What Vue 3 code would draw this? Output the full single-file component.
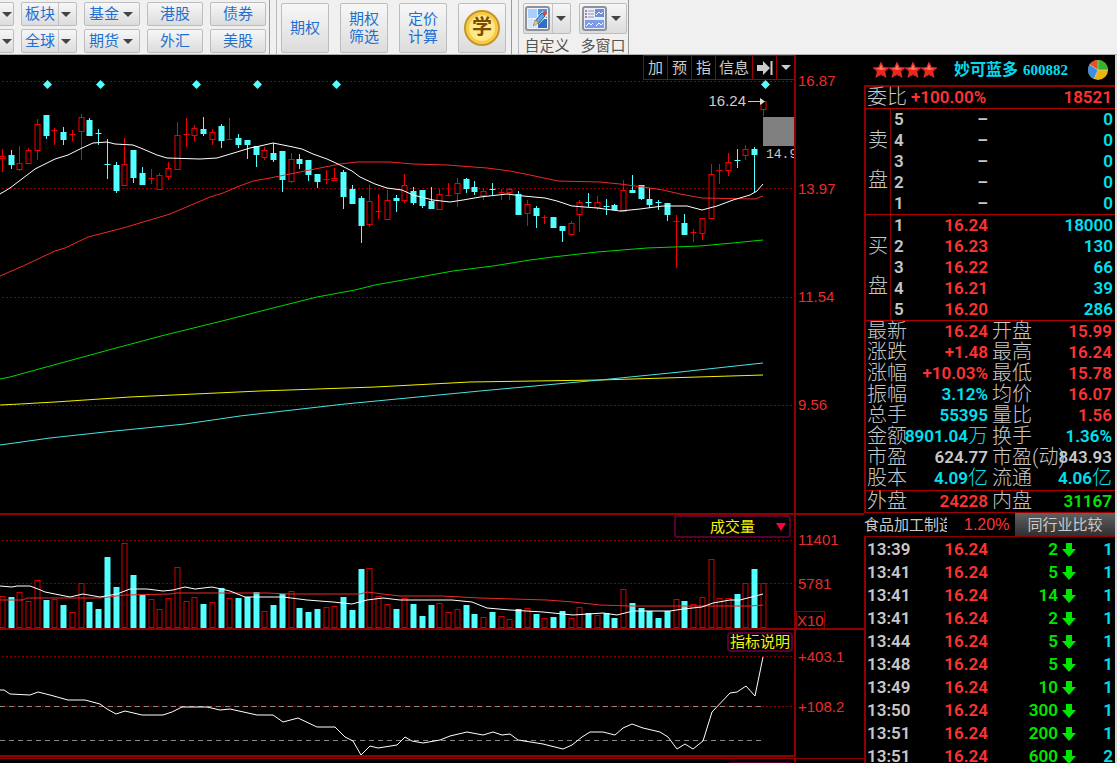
<script setup>
const categoryColumns = [
  { id: 'a', items: [{ name: '板块', arrow: true, split: true }, { name: '全球', arrow: true, split: true }] },
  { id: 'b', items: [{ name: '基金', arrow: true }, { name: '期货', arrow: true }] },
  { id: 'c', items: [{ name: '港股' }, { name: '外汇' }] },
  { id: 'd', items: [{ name: '债券' }, { name: '美股' }] },
]
const bigButtons = [['期权'], ['期权', '筛选'], ['定价', '计算']]

// direction, high, body top, body bottom, low, volume top
const rows = `r 149 156 158 172 596|c 150 155 164 169 597|r 146 163 169 171 592|r 148 150 163 163 601|r 119 124 150 160 580
c 115 115 135 139 600|r 128 130 131 145 599|c 127 132 139 145 605|r 130 134 134 141 612|r 114 117 131 160 583
c 118 120 135 135 602|c 129 133 133 145 609|c 139 164 164 179 557|c 162 165 190 193 587|r 138 164 185 185 543
c 150 150 177 183 575|c 167 173 184 184 595|r 169 178 179 184 599|r 173 175 189 190 609|r 162 168 176 180 598
r 122 135 169 169 567|r 118 134 134 147 601|r 125 128 135 141 597|c 117 129 133 136 604|r 129 132 139 145 602
c 124 126 140 148 588|r 118 139 140 140 598|c 134 138 144 148 598|c 140 140 144 159 597|c 146 146 154 167 592
r 147 150 157 160 611|c 143 153 159 162 605|c 151 151 179 192 594|r 153 159 181 183 591|c 154 159 163 169 608
c 160 160 174 181 612|c 174 174 181 188 609|r 170 179 179 184 607|r 168 178 180 181 606|c 170 172 196 209 597
c 185 189 203 204 610|c 196 198 225 243 569|r 185 201 224 227 568|r 194 211 211 219 596|r 190 200 219 219 604
c 195 198 200 212 609|r 174 185 200 203 598|c 187 191 202 205 604|c 190 190 205 208 616|c 187 201 208 208 605
r 189 194 209 210 603|r 183 195 196 196 612|r 178 183 193 207 609|c 178 179 188 193 605|c 181 187 191 195 614
r 188 191 195 200 617|c 183 189 190 195 612|r 189 192 192 200 616|r 188 189 192 200 619|c 191 194 214 214 609
r 200 204 213 226 608|c 206 208 215 228 614|r 215 217 218 224 618|c 217 217 227 227 617|c 226 226 230 242 611
r 221 223 234 234 618|r 200 202 214 232 607|c 193 202 203 207 613|r 196 202 207 210 615|c 199 206 207 215 613
c 204 205 209 209 618|r 180 190 211 211 589|c 175 190 192 193 603|c 185 185 198 200 608|c 188 199 204 208 611
c 200 202 203 210 618|c 203 203 214 221 611|r 215 221 222 268 599|c 214 223 234 235 601|r 229 232 232 242 604
r 218 218 233 240 597|r 164 174 218 219 559|r 164 170 171 184 598|r 153 162 170 176 598|c 149 160 161 168 594
r 145 149 155 160 583|c 147 149 154 193 569|r 101 101 109 116 583`
const candles = rows.split(/[|\n]/).map((row, i) => {
  const [dir, high, top, bottom, low, vol] = row.split(' ')
  return { x: Math.round(i * 8.747 + 2) + 0.5, up: dir === 'r', high: +high, top: +top, bottom: +bottom, low: +low, vol: +vol }
})

const gems = [47, 100, 196, 257, 336, 765]

const lines = {
  white: '0,194 10,188 35,169 55,159 68,155 82,148 93,143 107,142 115,144 133,145 143,149 157,155 167,158 200,159 217,158 227,155 237,152 250,148 260,146 273,143 293,147 302,149 313,154 327,159 338,164 352,171 360,177 375,184 387,188 402,190 413,195 433,200 450,202 463,200 480,197 507,194 523,196 545,198 557,201 572,206 597,208 620,211 640,209 663,206 687,206 702,210 717,206 733,200 750,195 757,191 763,184',
  red: '0,276 23,266 55,251 65,248 88,237 123,228 170,214 210,197 223,193 237,187 253,181 270,178 285,175 310,170 340,164 357,162 390,162 413,164 447,165 487,168 510,171 530,175 558,181 600,182 620,184 643,187 663,190 680,194 702,198 755,199 763,196',
  green: '0,379 10,377 28,372 116,348 165,335 222,321 277,307 317,297 355,290 375,285 403,280 453,271 493,266 530,260 553,257 597,252 647,248 700,246 733,243 763,240',
  yellow: '0,405 20,404 55,402 130,397 260,391 375,387 470,382 600,380 763,375',
  cyan: '0,445 50,438 105,432 185,424 240,416 345,404 480,391 600,380 680,372 763,363',
  volWhite: '0,586 12,587 17,586 30,586 38,589 45,592 70,597 83,594 100,597 117,594 130,589 147,589 163,591 173,590 185,587 195,589 212,587 230,591 245,597 283,597 307,600 333,602 352,604 367,600 383,598 400,600 452,600 472,602 487,608 510,610 543,612 573,615 603,613 617,615 633,611 670,611 683,609 702,607 713,603 730,600 740,600 763,594',
  volRed: '0,600 23,600 27,598 100,598 125,595 170,594 177,593 267,593 290,594 360,594 367,592 383,594 400,596 442,596 480,598 547,600 573,602 600,605 630,606 750,606 763,605',
  index: '0,690 4,690 10,694 30,695 38,692 50,695 68,700 85,700 100,704 107,709 116,714 125,711 142,715 163,715 172,712 182,707 207,707 220,710 230,709 257,715 273,715 283,722 298,718 317,727 335,727 345,737 353,741 361,755 370,746 378,748 397,745 405,737 412,741 423,743 440,740 450,736 467,732 483,735 493,732 502,735 510,734 518,740 543,744 563,749 572,745 582,737 590,732 603,732 615,735 623,728 632,724 643,728 660,732 668,737 677,749 685,744 693,749 703,741 712,712 730,693 737,692 746,686 755,696 763,657',
}

const asks = [5, 4, 3, 2, 1].map(level => ({ level, price: '–', qty: '0' }))
const bids = [[1, '16.24', '18000'], [2, '16.23', '130'], [3, '16.22', '66'], [4, '16.21', '39'], [5, '16.20', '286']]
  .map(([level, price, qty]) => ({ level, price, qty }))
const books = [
  { id: 'ask', chars: ['卖', '盘'], levels: asks, tone: 'pale' },
  { id: 'bid', chars: ['买', '盘'], levels: bids, tone: 'up' },
]

const facts = [
  ['最新', '16.24', '', 'up', '开盘', '15.99', '', 'up'],
  ['涨跌', '+1.48', '', 'up', '最高', '16.24', '', 'up'],
  ['涨幅', '+10.03%', '', 'up', '最低', '15.78', '', 'up'],
  ['振幅', '3.12%', '', 'aqua', '均价', '16.07', '', 'up'],
  ['总手', '55395', '', 'aqua', '量比', '1.56', '', 'up'],
  ['金额', '8901.04', '万', 'aqua', '换手', '1.36%', '', 'aqua'],
  ['市盈', '624.77', '', 'pale', '市盈(动)', '843.93', '', 'pale'],
  ['股本', '4.09', '亿', 'aqua', '流通', '4.06', '亿', 'aqua'],
]

const ticks = [
  ['13:39', 2, 1], ['13:41', 5, 1], ['13:41', 14, 1], ['13:41', 2, 1], ['13:44', 5, 1],
  ['13:48', 5, 1], ['13:49', 10, 1], ['13:50', 300, 1], ['13:51', 200, 1], ['13:51', 600, 2],
]
</script>

<template>
  <div class="app">
    <header class="toolbar">
      <div class="stack edge">
        <button class="btn" aria-label="更多行情"><i class="caret"></i></button>
        <button class="btn" aria-label="更多市场"><i class="caret"></i></button>
      </div>
      <div v-for="col in categoryColumns" :key="col.id" class="stack">
        <button v-for="b in col.items" :key="b.name" class="btn" :class="{ split: b.split }">
          <span class="btn-text">{{ b.name }}</span><span v-if="b.arrow" class="drop"><i class="caret"></i></span>
        </button>
      </div>
      <i class="divider"></i>
      <div class="bigs">
        <button v-for="(b, i) in bigButtons" :key="i" class="btn big">
          <span v-for="t in b" :key="t">{{ t }}</span>
        </button>
        <button class="btn big"><span class="coin">学</span></button>
      </div>
      <i class="divider"></i>
      <div class="tools">
        <div class="tool">
          <button class="btn tool-btn split" aria-labelledby="t1">
            <svg width="25" height="25" viewBox="0 0 25 25">
              <rect x="1" y="1" width="23" height="23" rx="2" fill="#eef2f6" stroke="#8d9299" stroke-width="2" />
              <rect x="3" y="3" width="9" height="9" fill="#a9d0fa" /><rect x="13" y="3" width="9" height="9" fill="#4a93e6" />
              <rect x="3" y="13" width="9" height="9" fill="#d3e6fb" /><rect x="13" y="13" width="9" height="9" fill="#2f6fc8" />
              <path d="M7 21l2-7 9-9 5 4-9 9z" fill="#fff" /><path d="M10 15l7-8 3 3-7 8z" fill="#5ba5ed" stroke="#34567d" />
              <path d="M17 7l2-2q3 0 3 3l-2 2z" fill="#db4932" /><path d="M8 20l2-6 4 3z" fill="#eec394" stroke="#7f6755" stroke-width=".6" />
            </svg>
            <span class="drop"><i class="caret"></i></span>
          </button>
          <span id="t1">自定义</span>
        </div>
        <div class="tool">
          <button class="btn tool-btn" aria-labelledby="t2">
            <svg width="25" height="25" viewBox="0 0 25 25">
              <rect x="1" y="1" width="23" height="23" rx="2" fill="#e8edfa" stroke="#8d9299" stroke-width="2" />
              <path d="M3 5h2M3 8h2M3 11h2" stroke="#bf5264" stroke-width="1.500" /><path d="M6 5h6M6 8h6M6 11h6" stroke="#8d93b4" />
              <rect x="13" y="3" width="9" height="8" fill="#6f8fdc" /><rect x="3" y="14" width="19" height="8" fill="#7f9de6" />
              <path d="M14 9l3-3 2 2 2-2M4 20l3-3 2 2 2-2M14 20l3-3 2 2 2-2" fill="none" stroke="#fff" />
            </svg>
            <span class="drop"><i class="caret"></i></span>
          </button>
          <span id="t2">多窗口</span>
        </div>
      </div>
      <i class="divider end"></i>
    </header>

    <main class="main">
      <section class="charts">
        <div class="panel price">
          <div class="plot">
            <svg class="canvas" viewBox="0 55 794 458" preserveAspectRatio="none">
              <path class="grid" d="M2 81.5H794M2 188.5H794M2 297.5H794M2 405.5H794" />
              <g v-for="(c, i) in candles" :key="i" :class="c.up ? 'rise' : 'fall'">
                <path :d="`M${c.x} ${c.high}V${c.top}M${c.x} ${c.bottom}V${c.low}`" />
                <path v-if="c.bottom - c.top < 2" class="flat" :d="`M${c.x - 3} ${c.top + 0.5}h6`" />
                <rect v-else :x="c.x - 2.5" :y="c.top + 0.5" width="5" :height="c.bottom - c.top" />
              </g>
              <polyline class="ln green" :points="lines.green" />
              <polyline class="ln yellow" :points="lines.yellow" />
              <polyline class="ln cyan" :points="lines.cyan" />
              <polyline class="ln red" :points="lines.red" />
              <polyline class="ln white" :points="lines.white" />
              <path v-for="g in gems" :key="g" :d="`M${g + 0.5} 80l4.500 4.500-4.500 4.500-4.500-4.500z`" fill="#54ffff" />
              <rect x="763" y="117" width="31" height="29" fill="#808080" />
              <path d="M748 101.500h12" stroke="#c8c8c8" /><path d="M760 98l5 3.500-5 3.500z" fill="#ddd" />
            </svg>
            <nav class="menu">
              <button>加</button><button>预</button><button>指</button><button class="wide">信息</button>
              <button aria-label="跳至最新">
                <svg width="18" height="16" viewBox="0 0 18 16"><path d="M1 5h6V1l7 7-7 7v-4H1z" fill="#ccc" /><path d="M15.500 1v14" stroke="#ccc" stroke-width="2" /></svg>
              </button>
              <button class="last" aria-label="菜单"><i class="caret light"></i></button>
            </nav>
            <span class="peak">16.24</span>
            <span class="gap">14.9</span>
          </div>
          <div class="axis"><span>16.87</span><span>13.97</span><span>11.54</span><span>9.56</span></div>
        </div>

        <div class="panel volume">
          <div class="plot">
            <svg class="canvas" viewBox="0 515 794 113" preserveAspectRatio="none">
              <path class="grid" d="M2 540.5H794M2 583.5H794" />
              <g v-for="(c, i) in candles" :key="i" :class="c.up ? 'rise' : 'fall'">
                <rect class="vol" :x="c.x - 2.5" :y="c.vol + 0.5" width="5" :height="627 - c.vol" />
              </g>
              <polyline class="ln red" :points="lines.volRed" />
              <polyline class="ln white" :points="lines.volWhite" />
            </svg>
            <button class="chip vol-chip">成交量<i class="tri"></i></button>
          </div>
          <div class="axis"><span>11401</span><span>5781</span><span class="unit">X10</span></div>
        </div>

        <div class="panel index">
          <div class="plot">
            <svg class="canvas" viewBox="0 630 794 125" preserveAspectRatio="none">
              <path class="grid" d="M2 656.5H794M2 706.5H794" />
              <path class="dash" d="M0 706.500H763M0 740.500H763" />
              <polyline class="ln white" :points="lines.index" />
            </svg>
            <button class="chip info-chip">指标说明</button>
          </div>
          <div class="axis"><span>+403.1</span><span>+108.2</span></div>
        </div>
        <div class="panel next"><div class="plot"><i class="chip stub"></i></div><div class="axis"></div></div>
      </section>

      <aside class="quote">
        <div class="title">
          <span class="stars">
            <svg v-for="n in 4" :key="n" width="16" height="16" viewBox="0 0 16 16">
              <path d="M8 0l2.400 5.300 5.600.500-4.200 3.800 1.400 6L8 12.600l-5.200 3 1.400-6L0 5.800l5.600-.500z" fill="#f0261c" stroke="#c33a30" stroke-width=".6" />
              <path d="M8 2l1.500 4 4 .700-5.500 1.300-5.500-1.400 4-.600z" fill="#ff7466" />
            </svg>
          </span>
          <b class="name">妙可蓝多</b><b class="code">600882</b>
          <svg class="pie" width="20" height="20" viewBox="0 0 20 20">
            <circle cx="10" cy="10" r="10" fill="#e9b50f" /><path d="M10 10V0a10 10 0 0 1 10 10z" fill="#35b52d" />
            <path d="M10 10L1.500 4.500A10 10 0 0 1 10 0z" fill="#e0532a" /><path d="M10 10L1.500 4.500A10 10 0 0 0 6 19z" fill="#3c8fe0" />
            <path d="M10 10L1.500 4.500M10 10V0M10 10h10M10 10L6 19" stroke="#f5e6b0" stroke-width=".5" />
          </svg>
        </div>

        <div class="board">
          <div class="ratio"><span class="lab">委比</span><b class="up">+100.00%</b><b class="up end">18521</b></div>
          <div v-for="book in books" :key="book.id" class="book">
            <div class="side"><span v-for="(c, i) in book.chars" :key="i">{{ c }}</span></div>
            <table>
              <tbody>
                <tr v-for="l in book.levels" :key="l.level">
                  <th scope="row">{{ l.level }}</th><td class="p" :class="book.tone">{{ l.price }}</td><td class="aqua">{{ l.qty }}</td>
                </tr>
              </tbody>
            </table>
          </div>
          <table class="facts">
            <colgroup><col class="c1"><col class="c2"><col class="c3"><col class="c4"></colgroup>
            <tbody>
              <tr v-for="f in facts" :key="f[0] + f[4]">
                <th scope="row">{{ f[0] }}</th>
                <td><div :class="f[3]">{{ f[1] }}<span v-if="f[2]" class="u">{{ f[2] }}</span></div></td>
                <th scope="row">{{ f[4] }}</th>
                <td><div :class="f[7]">{{ f[5] }}<span v-if="f[6]" class="u">{{ f[6] }}</span></div></td>
              </tr>
            </tbody>
          </table>
          <table class="facts flow">
            <colgroup><col class="c1"><col class="c2"><col class="c3"><col class="c4"></colgroup>
            <tbody>
              <tr><th scope="row">外盘</th><td><div class="up">24228</div></td><th scope="row">内盘</th><td><div class="down">31167</div></td></tr>
            </tbody>
          </table>
        </div>

        <div class="sector">
          <span class="sector-name">食品加工制造</span><span class="sector-pct">1.20%</span>
          <button class="compare">同行业比较</button>
        </div>

        <div class="ticks">
          <table>
            <tbody>
              <tr v-for="(t, i) in ticks" :key="i">
                <th scope="row">{{ t[0] }}</th><td class="up t-price">16.24</td><td class="down t-vol">{{ t[1] }}</td>
                <td class="t-arrow"><svg width="14" height="14" viewBox="0 0 14 14"><path d="M4 0h6v6h4l-7 8-7-8h4z" fill="#00e600" /></svg></td>
                <td class="aqua">{{ t[2] }}</td>
              </tr>
            </tbody>
          </table>
        </div>
      </aside>
    </main>
  </div>
</template>

<style>
body { margin: 0; background: #000; overflow: hidden; }
</style>

<style scoped>
* { box-sizing: border-box; }
.app { height: 100vh; overflow: hidden; display: flex; flex-direction: column; background: #000; font-family: "Liberation Sans", "Noto Sans CJK SC", sans-serif; }
button { font: inherit; margin: 0; padding: 0; cursor: pointer; }

.toolbar { flex: none; height: 55px; display: flex; background: #f0f0f0; border-bottom: 1px solid #b0b0b0; color: #1f6fd0; font-size: 15px; overflow: hidden; }
.stack { display: flex; flex-direction: column; gap: 3px; padding-top: 2px; margin-right: 7px; width: 56px; }
.stack.edge { width: 14px; }
.stack .btn { height: 24px; }
.edge .btn { margin-left: -8px; justify-content: flex-end; padding-right: 1px; }
.btn { display: flex; align-items: center; justify-content: center; background: linear-gradient(#f7f7f7, #dcdcdc); border: 1px solid #bdbdbd; border-radius: 2px; color: inherit; line-height: 18px; }
.btn-text { flex: none; }
.drop { display: flex; align-items: center; justify-content: center; width: 15px; height: 100%; margin-left: 1px; }
.split .drop { border-left: 1px solid #c4c4c4; margin-left: 3px; }
.caret { flex: none; border: 5px solid transparent; border-top-color: #444; border-bottom: 0; }
.caret.light { border-top-color: #ccc; }
.divider { flex: none; width: 8px; margin: 0 4px 0 -4px; border-left: 1px solid #999; border-right: 1px solid #bbb; }
.bigs { display: flex; gap: 11px; padding-top: 3px; margin-right: 9px; }
.btn.big { width: 48px; height: 50px; flex-direction: column; }
.coin { width: 36px; height: 36px; border-radius: 50%; border: 2px solid #c4952c; background: radial-gradient(#ffe88b 55%, #f8c93c 60%, #ffe27a); color: #7b4b00; font-size: 20px; font-weight: bold; line-height: 31px; text-align: center; }
.tools { display: flex; gap: 8px; padding-top: 3px; color: #555; }
.tool { display: flex; flex-direction: column; align-items: center; line-height: 24px; width: 48px; white-space: nowrap; }
.tool-btn { width: 48px; height: 31px; flex: none; }
.tool-btn .drop { width: 17px; }
.tool-btn.split .drop { margin-left: 2px; }
.divider.end { margin: 0 0 0 1px; border-right: 0; }

.main { flex: 1; min-height: 0; display: flex; }
.charts { flex: 1; min-width: 0; display: flex; flex-direction: column; }
.panel { flex: none; display: flex; border-bottom: 2px solid #8f0000; }
.price { height: 460px; }
.volume { height: 115px; }
.index { height: 127px; border-bottom: 0; }
.index .plot { border-bottom: 2px solid #8f0000; }
.next { flex: 1; margin-top: 1px; border-top: 1px solid #8f0000; border-bottom: 0; }
.plot { position: relative; flex: 1; min-width: 0; border-right: 2px solid #8f0000; }
.canvas { display: block; width: 100%; height: 100%; }
.grid { stroke: #8a0000; stroke-dasharray: 2 2; fill: none; }
.dash { stroke: #888; stroke-dasharray: 5 4; }
.rise path { stroke: #f00000; fill: none; }
.rise rect { stroke: #f00000; fill: #000; }
.rise .vol { stroke: #d00000; }
.fall path { stroke: #54ffff; }
.fall rect { fill: #54ffff; stroke: #54ffff; }
.ln { fill: none; stroke-width: 1; }
.white { stroke: #fff; }
.red { stroke: #f02828; }
.green { stroke: #00d800; }
.yellow { stroke: #f2f200; }
.cyan { stroke: #48e4e4; }
.axis { width: 68px; color: #e82c2c; font-size: 15px; line-height: 20px; display: flex; flex-direction: column; padding-left: 2px; }
.price .axis { padding-top: 16px; gap: 88px; }
.volume .axis { padding-top: 15px; gap: 24px; }
.index .axis { padding-top: 17px; gap: 30px; }
.axis .unit { border: 1px solid #8f0000; width: 29px; height: 19px; line-height: 18px; margin-top: -7px; margin-left: -2px; }

.menu { position: absolute; top: 0; right: 0; display: flex; border: 1px solid #a00000; border-right: 0; background: #000; }
.menu button { width: 24px; height: 23px; background: #000; border: 0; border-right: 1px solid #a00000; color: #ccc; font-size: 15px; line-height: 22px; display: flex; align-items: center; justify-content: center; }
.menu .wide { width: 37px; }
.menu .last { width: 17px; border-right: 0; }
.peak { position: absolute; right: 48px; top: 36px; font-size: 15px; line-height: 20px; color: #ccc; }
.gap { position: absolute; left: calc(100% - 28px); right: 0; top: 90px; overflow: hidden; font: 13px/20px "Liberation Mono", monospace; color: #ccc; }
.chip { position: absolute; right: 3px; display: flex; align-items: center; border: 2px solid #560030; border-radius: 4px; background: #000; color: #f4f400; font-size: 15px; line-height: 18px; }
.vol-chip { top: 0; width: 117px; height: 23px; justify-content: flex-end; gap: 21px; padding-right: 3px; }
.tri { border: 5px solid transparent; border-top: 8px solid #ff0040; border-bottom: 0; }
.info-chip { top: 2px; right: 1px; width: 66px; height: 20px; justify-content: center; white-space: nowrap; }
.stub { top: 3px; right: 1px; width: 66px; height: 20px; }

.quote { flex: none; width: 253px; border-right: 2px solid #d8d8d8; display: flex; flex-direction: column; overflow: hidden; }
.up { color: #ff3232; }
.aqua { color: #00e1f0; }
.down { color: #00e600; }
.pale { color: #c8c8c8; }
.title { flex: none; height: 30px; display: flex; align-items: center; padding: 0 7px 0 9px; color: #00dcec; }
.stars { display: flex; width: 65px; margin-right: 16px; }
.name { font-size: 16px; line-height: 20px; }
.code { font: bold 15px/20px "Liberation Serif", serif; margin-left: 5px; }
.pie { margin-left: auto; }
.board { flex: none; border: 2px solid #900000; border-right: 0; border-bottom: 1px solid #a00000; font-family: Roboto, "Noto Sans CJK SC", sans-serif; font-size: 17px; }
.ratio { display: flex; align-items: center; height: 21px; line-height: 21px; padding: 0 3px 0 1px; }
.ratio b { font-weight: 600; margin-left: 4px; }
.ratio .end { margin-left: auto; }
.lab, .side, .facts th, .u { font-size: 20px; font-weight: 300; color: #c8c8c8; }
.book { display: flex; border-top: 1px solid #b00000; }
.side { width: 25px; border-right: 1px solid #900000; display: flex; flex-direction: column; align-items: center; gap: 18px; padding-top: 20px; line-height: 22px; }
table { border-collapse: collapse; flex: 1; width: 100%; table-layout: fixed; }
td, th { padding: 0; line-height: 21px; text-align: right; font-weight: 600; }
th { text-align: left; color: #c8c8c8; }
.book th { width: 18px; padding-left: 3px; }
.book td { padding-right: 2px; }
.book .p { width: 79px; padding: 0; }
.facts { border-top: 1px solid #b00000; }
.facts th { white-space: nowrap; padding-left: 1px; height: 21px; }
.facts td div { display: flex; justify-content: flex-end; line-height: 21px; height: 21px; }
.facts .u { color: inherit; }
.c1 { width: 34px; }
.c2 { width: 88px; }
.c3 { width: 69px; }
.c4 { width: auto; }
.facts td:last-child { padding-right: 3px; }
.facts td + th { padding-left: 4px; }
.flow { margin-top: 1px; }

.sector { flex: none; display: flex; height: 23px; align-items: center; font-size: 15px; line-height: 22px; }
.sector-name { width: 83px; overflow: hidden; white-space: nowrap; color: #ccc; }
.sector-pct { color: #ff3232; margin-left: 17px; font-size: 16px; }
.compare { margin-left: auto; width: 100px; height: 23px; border: 0; background: linear-gradient(#606060, #303030); color: #ccc; line-height: 22px; }
.ticks { flex: 1; min-height: 0; overflow: hidden; border-left: 2px solid #900000; border-top: 1px solid #900000; padding-top: 1px; font-family: Roboto, sans-serif; font-size: 17px; }
.ticks td, .ticks th { height: 23px; line-height: 23px; }
.ticks th { width: 60px; padding-left: 1px; }
.ticks .t-price { width: 62px; }
.ticks .t-vol { width: 70px; }
.ticks .t-arrow { width: 18px; }
.t-arrow svg { display: block; margin-left: auto; }
.ticks td:last-child { padding-right: 2px; }
</style>
